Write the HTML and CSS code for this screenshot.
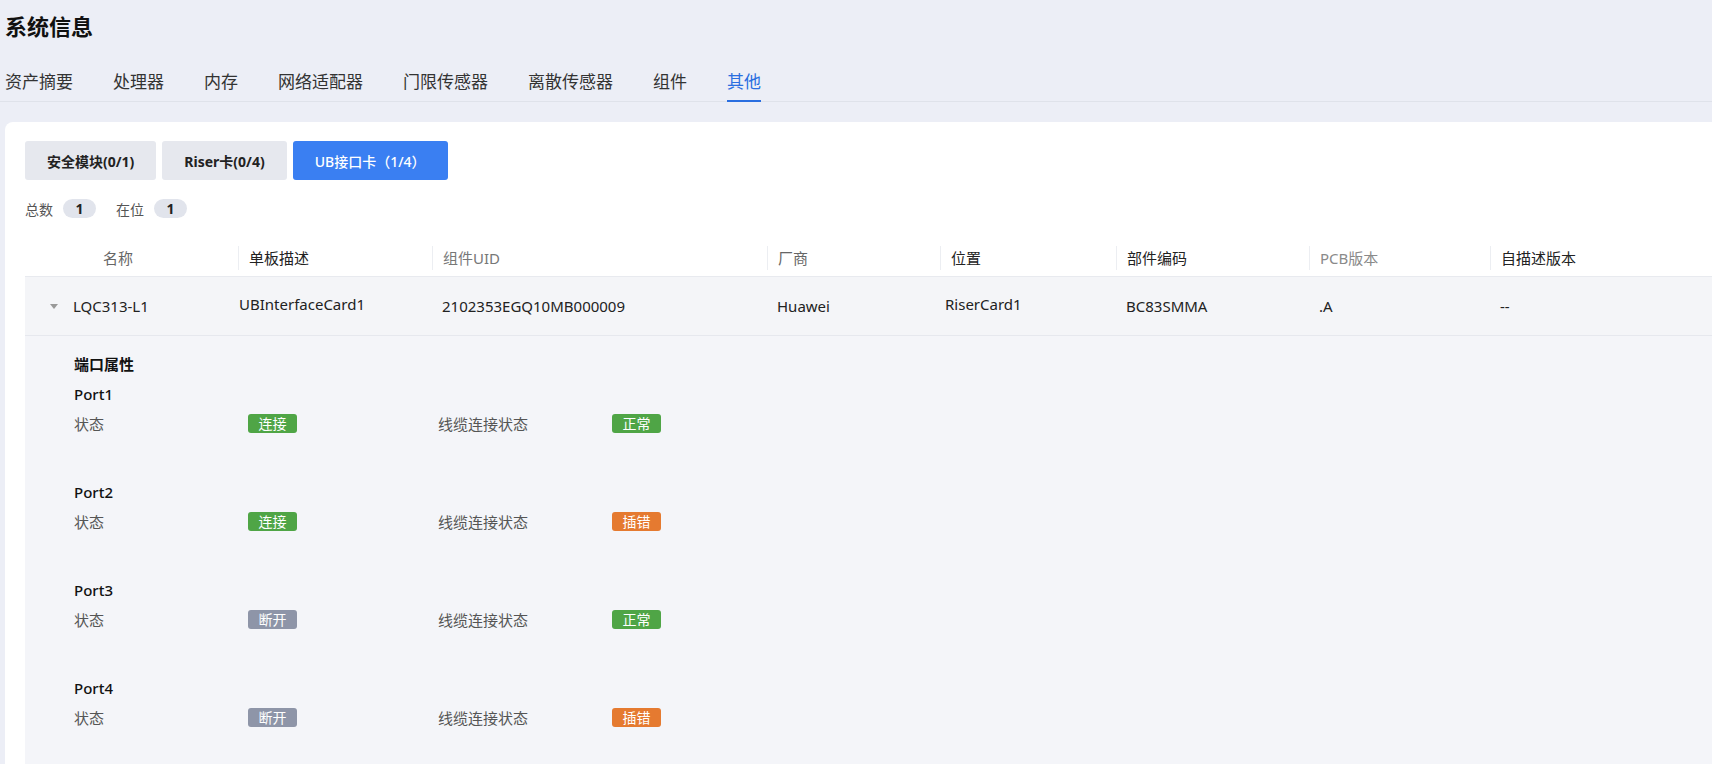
FILE: index.html
```html
<!DOCTYPE html>
<html lang="zh-CN">
<head>
    <meta charset="UTF-8">
    <title>系统信息</title>
    <link rel="stylesheet" href="styles.css">
</head>
<body>
    <h1 class="page-title">系统信息</h1>

    <nav class="tabs">
        <span class="tab">资产摘要</span>
        <span class="tab">处理器</span>
        <span class="tab">内存</span>
        <span class="tab">网络适配器</span>
        <span class="tab">门限传感器</span>
        <span class="tab">离散传感器</span>
        <span class="tab">组件</span>
        <span class="tab active">其他</span>
    </nav>

    <div class="card">
        <div class="switcher">
            <button class="switch-btn">安全模块(0/1)</button>
            <button class="switch-btn">Riser卡(0/4)</button>
            <button class="switch-btn active">UB接口卡（1/4）</button>
        </div>

        <div class="counts">
            <span class="count-label">总数</span>
            <span class="count-pill">1</span>
            <span class="count-label">在位</span>
            <span class="count-pill">1</span>
        </div>

        <div class="table">
            <div class="table-head">
                <div class="th th-name">名称</div>
                <div class="th dark">单板描述</div>
                <div class="th mid">组件UID</div>
                <div class="th">厂商</div>
                <div class="th dark">位置</div>
                <div class="th dark">部件编码</div>
                <div class="th light">PCB版本</div>
                <div class="th dark">自描述版本</div>
            </div>
            <div class="table-row">
                <div class="td td-name"><span class="caret"></span>LQC313-L1</div>
                <div class="td td-tight raised">UBInterfaceCard1</div>
                <div class="td">2102353EGQ10MB000009</div>
                <div class="td">Huawei</div>
                <div class="td td-near raised">RiserCard1</div>
                <div class="td">BC83SMMA</div>
                <div class="td">.A</div>
                <div class="td">--</div>
            </div>

            <div class="detail">
                <div class="detail-title">端口属性</div>

                <div class="port">
                    <div class="port-name">Port1</div>
                    <div class="port-row">
                        <span class="prop">状态</span>
                        <span class="prop-val"><span class="badge green">连接</span></span>
                        <span class="prop">线缆连接状态</span>
                        <span class="prop-val"><span class="badge green">正常</span></span>
                    </div>
                </div>

                <div class="port">
                    <div class="port-name">Port2</div>
                    <div class="port-row">
                        <span class="prop">状态</span>
                        <span class="prop-val"><span class="badge green">连接</span></span>
                        <span class="prop">线缆连接状态</span>
                        <span class="prop-val"><span class="badge orange">插错</span></span>
                    </div>
                </div>

                <div class="port">
                    <div class="port-name">Port3</div>
                    <div class="port-row">
                        <span class="prop">状态</span>
                        <span class="prop-val"><span class="badge grey">断开</span></span>
                        <span class="prop">线缆连接状态</span>
                        <span class="prop-val"><span class="badge green">正常</span></span>
                    </div>
                </div>

                <div class="port">
                    <div class="port-name">Port4</div>
                    <div class="port-row">
                        <span class="prop">状态</span>
                        <span class="prop-val"><span class="badge grey">断开</span></span>
                        <span class="prop">线缆连接状态</span>
                        <span class="prop-val"><span class="badge orange">插错</span></span>
                    </div>
                </div>
            </div>
        </div>
    </div>
</body>
</html>
```

FILE: styles.css
```css
* {
    margin: 0;
    padding: 0;
    box-sizing: border-box;
}

body {
    font-family: "Noto Sans", "Noto Sans CJK SC", sans-serif;
    background: #eceef6;
    color: #222;
    height: 764px;
    overflow: hidden;
}

.page-title {
    font-size: 22px;
    font-weight: 700;
    line-height: 30px;
    padding: 11px 0 0 5px;
    color: #111;
}

.tabs {
    display: flex;
    gap: 40px;
    margin-top: 29px;
    padding-left: 5px;
    border-bottom: 1px solid #dfe2ea;
}

.tab {
    font-size: 17px;
    line-height: 24px;
    color: #333;
    padding-bottom: 6px;
    border-bottom: 2px solid transparent;
    margin-bottom: -1px;
}

.tab.active {
    color: #2a6ee0;
    border-bottom-color: #2a6ee0;
}

.card {
    background: #fff;
    margin: 20px 0 0 5px;
    border-top-left-radius: 8px;
    padding: 19px 0 0 20px;
    height: 643px;
    overflow: hidden;
}

.switcher {
    display: flex;
    gap: 6px;
}

.switch-btn {
    font-family: inherit;
    font-size: 14px;
    font-weight: 700;
    height: 39px;
    padding: 0 22px;
    border: none;
    border-radius: 3px;
    background: #e6e8ee;
    color: #222;
}

.switch-btn.active {
    background: #3a7ff2;
    color: #fff;
    font-weight: 500;
}

.counts {
    display: flex;
    align-items: center;
    height: 19px;
    margin-top: 19px;
    font-size: 14px;
}

.count-label {
    color: #555;
    margin-right: 10px;
}

.count-pill {
    width: 33px;
    height: 19px;
    line-height: 19px;
    border-radius: 10px;
    background: #e1e4ec;
    text-align: center;
    font-weight: 700;
    color: #222;
    margin-right: 20px;
}

.table {
    margin-top: 21px;
}

.table-head,
.table-row {
    display: grid;
    grid-template-columns: 213px 194px 335px 173px 176px 193px 181px 1fr;
}

.table-head {
    height: 38px;
    align-items: center;
    border-bottom: 1px solid #e8eaef;
}

.th {
    font-size: 15px;
    color: #666;
    padding-left: 10px;
    border-left: 1px solid #eceef2;
    line-height: 24px;
}

.th.dark { color: #222; }
.th.mid { color: #777; }
.th.light { color: #8a8a8a; }

.th.th-name {
    border-left: none;
    padding-left: 78px;
}

.table-row {
    height: 59px;
    align-items: center;
    background: #f4f5f8;
    border-bottom: 1px solid #e6e8ee;
}

.td {
    font-size: 15px;
    color: #222;
    padding-left: 10px;
}

.td.td-tight { padding-left: 1px; }
.td.td-near { padding-left: 5px; }
.td.raised { padding-bottom: 4px; }

.td.td-name {
    display: flex;
    align-items: center;
    padding-left: 25px;
}

.caret {
    width: 0;
    height: 0;
    border-left: 4px solid transparent;
    border-right: 4px solid transparent;
    border-top: 5px solid #999;
    margin-right: 15px;
}

.detail {
    background: #f4f5f9;
    padding: 18px 0 0 49px;
    height: 429px;
}

.detail-title {
    font-size: 15px;
    font-weight: 700;
    line-height: 20px;
    color: #111;
    margin-bottom: 10px;
}

.port {
    margin-bottom: 50px;
}

.port-name {
    font-size: 15px;
    font-weight: 500;
    line-height: 20px;
    color: #111;
    margin-bottom: 8px;
}

.port-row {
    display: grid;
    grid-template-columns: 174px 190px 174px 100px;
    align-items: center;
    height: 20px;
}

.prop {
    font-size: 15px;
    color: #555;
}

.badge {
    display: inline-block;
    width: 49px;
    height: 19px;
    line-height: 19px;
    border-radius: 3px;
    text-align: center;
    font-size: 14px;
    color: #fff;
}

.badge.green { background: #4fa546; }
.badge.orange { background: #e57a30; }
.badge.grey { background: #8e95a8; }
```
